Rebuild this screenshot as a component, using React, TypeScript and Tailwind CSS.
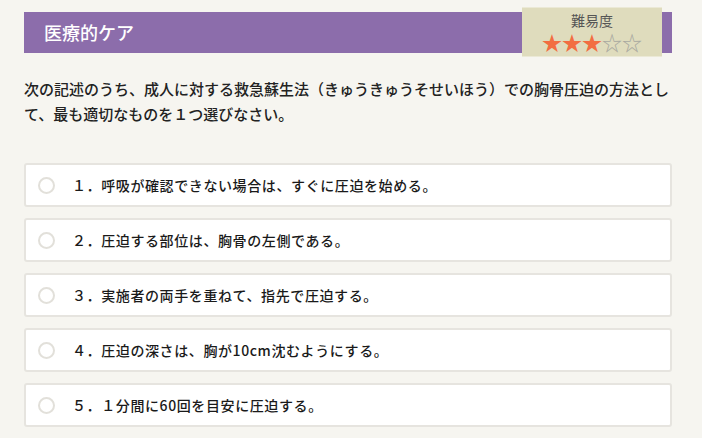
const options = [
  "１．呼吸が確認できない場合は、すぐに圧迫を始める。",
  "２．圧迫する部位は、胸骨の左側である。",
  "３．実施者の両手を重ねて、指先で圧迫する。",
  "４．圧迫の深さは、胸が10cm沈むようにする。",
  "５．１分間に60回を目安に圧迫する。",
];

export default function App() {
  return (
    <div
      className="min-h-[438px] bg-[#f6f5f0] pt-[12px] pr-[30px] pb-4 pl-6 text-[#222]"
      style={{ fontFamily: '"Noto Sans CJK JP", "Noto Sans", sans-serif' }}
    >
      <header className="relative flex h-[41px] items-center bg-[#8c6dab] pl-5">
        <h1 className="text-[18px] font-medium text-white">医療的ケア</h1>
        <div className="absolute top-[-5px] right-[10px] flex h-[50px] w-[140px] flex-col items-center border-y border-[#ebe9d6] bg-[#dfdcbd] pt-[3px]">
          <span className="text-[14px] leading-[18px] text-[#555]">難易度</span>
          <div className="mt-[3px] flex text-[20px] leading-[22px]">
            <span className="text-[#f26d42]">★★★</span>
            <span className="text-[#a8a8a0]">☆☆</span>
          </div>
        </div>
      </header>

      <p className="mt-[23px] text-[15px] leading-[25px] font-medium">
        次の記述のうち、成人に対する救急蘇生法（きゅうきゅうそせいほう）での胸骨圧迫の方法として、最も適切なものを１つ選びなさい。
      </p>

      <ul className="mt-[37px] flex flex-col gap-[11px]">
        {options.map((text) => (
          <li
            key={text}
            className="flex h-[44px] items-center rounded-[3px] border-2 border-[#e6e4df] bg-white pl-[12px]"
          >
            <span className="h-[17px] w-[17px] shrink-0 rounded-full border-2 border-[#e2e0da]" />
            <span className="ml-[17px] text-[14px] font-medium tracking-[0.6px] text-[#1a1a1a]">{text}</span>
          </li>
        ))}
      </ul>
    </div>
  );
}
